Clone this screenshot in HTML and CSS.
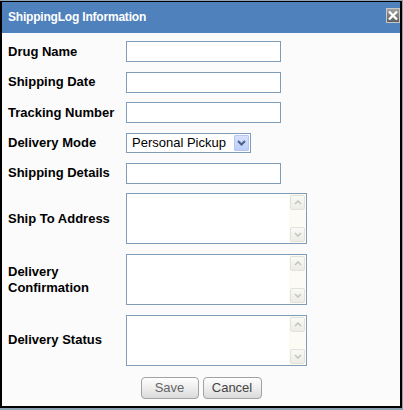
FILE: index.html
```html
<!DOCTYPE html>
<html>
<head>
<meta charset="utf-8">
<link rel="stylesheet" href="styles.css">
</head>
<body>
<div class="dialog">
  <div class="titlebar">
    <span class="title">ShippingLog Information</span>
    <span class="close">
      <svg width="14" height="15" viewBox="0 0 14 15">
        <defs><linearGradient id="cg" x1="0" y1="0" x2="0" y2="1"><stop offset="0" stop-color="#a4a4a4"/><stop offset="1" stop-color="#5c5c5c"/></linearGradient></defs>
        <rect x="0.5" y="0.5" width="13" height="14" fill="url(#cg)" stroke="#c8c8c8"/>
        <path d="M3 3.5L11 11.5M11 3.5L3 11.5" stroke="#fff" stroke-width="2.4"/>
      </svg>
    </span>
  </div>
  <div class="body">
    <div class="form">
      <div class="row"><label class="lbl">Drug Name</label><input class="txt" type="text"></div>
      <div class="row"><label class="lbl">Shipping Date</label><input class="txt" type="text"></div>
      <div class="row"><label class="lbl">Tracking Number</label><input class="txt" type="text"></div>
      <div class="row"><label class="lbl">Delivery Mode</label>
        <div class="select"><span class="sel-text">Personal Pickup</span><span class="sel-btn"><svg width="9" height="6" viewBox="0 0 9 6"><path d="M1 1L4.5 4.5L8 1" fill="none" stroke="#4d6185" stroke-width="2"/></svg></span></div>
      </div>
      <div class="row"><label class="lbl">Shipping Details</label><input class="txt" type="text"></div>
      <div class="row"><label class="lbl">Ship To Address</label>
        <div class="ta"><textarea></textarea><div class="sb"><div class="sb-btn"><svg width="8" height="5" viewBox="0 0 8 5"><path d="M1 4L4 1L7 4" fill="none" stroke="#c4c4bc" stroke-width="1.5"/></svg></div><div class="sb-btn"><svg width="8" height="5" viewBox="0 0 8 5"><path d="M1 1L4 4L7 1" fill="none" stroke="#c4c4bc" stroke-width="1.5"/></svg></div></div></div>
      </div>
      <div class="row"><label class="lbl">Delivery Confirmation</label>
        <div class="ta"><textarea></textarea><div class="sb"><div class="sb-btn"><svg width="8" height="5" viewBox="0 0 8 5"><path d="M1 4L4 1L7 4" fill="none" stroke="#c4c4bc" stroke-width="1.5"/></svg></div><div class="sb-btn"><svg width="8" height="5" viewBox="0 0 8 5"><path d="M1 1L4 4L7 1" fill="none" stroke="#c4c4bc" stroke-width="1.5"/></svg></div></div></div>
      </div>
      <div class="row"><label class="lbl">Delivery Status</label>
        <div class="ta"><textarea></textarea><div class="sb"><div class="sb-btn"><svg width="8" height="5" viewBox="0 0 8 5"><path d="M1 4L4 1L7 4" fill="none" stroke="#c4c4bc" stroke-width="1.5"/></svg></div><div class="sb-btn"><svg width="8" height="5" viewBox="0 0 8 5"><path d="M1 1L4 4L7 1" fill="none" stroke="#c4c4bc" stroke-width="1.5"/></svg></div></div></div>
      </div>
    </div>
    <div class="actions">
      <button class="btn save">Save</button>
      <button class="btn cancel">Cancel</button>
    </div>
  </div>
</div>
</body>
</html>
```
FILE: styles.css
```css
html, body {
  margin: 0;
  padding: 0;
}
body {
  background: #8da1b5;
  font-family: "Liberation Sans", Arial, sans-serif;
  width: 403px;
  height: 410px;
  overflow: hidden;
}
.dialog {
  margin-top: 1px;
  width: 402px;
  height: 407px;
  box-sizing: border-box;
  border-style: solid;
  border-color: #000;
  border-width: 1px 2px 2px 2px;
  background: #fbfbfb;
  display: flex;
  flex-direction: column;
  overflow: hidden;
}
.titlebar {
  height: 31px;
  flex: none;
  background: #4f81bd;
  display: flex;
  justify-content: space-between;
  align-items: flex-start;
  padding-left: 6px;
}
.title {
  color: #fff;
  font-weight: bold;
  font-size: 12px;
  letter-spacing: -0.2px;
  line-height: 31px;
}
.close {
  margin-top: 6px;
  width: 14px;
  height: 15px;
  display: block;
}
.close svg {
  display: block;
}
.body {
  padding-top: 8px;
}
.form {
  padding-left: 6px;
  display: flex;
  flex-direction: column;
  gap: 9.7px;
}
.row {
  display: flex;
  align-items: center;
}
.lbl {
  width: 118px;
  flex: none;
  font-weight: bold;
  font-size: 13px;
  line-height: 16px;
  color: #000;
}
.txt {
  width: 155px;
  height: 21px;
  box-sizing: border-box;
  border: 1px solid #7f9db9;
  background: #fff;
  margin: 0;
  padding: 0 3px;
  font: 13px "Liberation Sans", Arial, sans-serif;
  outline: none;
}
.select {
  width: 125px;
  height: 20px;
  box-sizing: border-box;
  border: 1px solid #7f9db9;
  background: #fff;
  display: flex;
  align-items: center;
  padding: 0 1px 0 1px;
}
.sel-text {
  flex: 1;
  font-size: 13px;
  padding-left: 4px;
  color: #000;
  line-height: 16px;
}
.sel-btn {
  width: 15px;
  height: 16px;
  box-sizing: border-box;
  border: 1px solid #b4c7f2;
  border-radius: 1px;
  background: linear-gradient(#d6e1fd, #bccdf8);
  display: flex;
  align-items: center;
  justify-content: center;
}
.sel-btn svg {
  display: block;
}
.ta {
  width: 181px;
  height: 51px;
  box-sizing: border-box;
  border: 1px solid #7f9db9;
  background: #fff;
  display: flex;
}
.ta textarea {
  flex: 1;
  min-width: 0;
  border: 0;
  margin: 0;
  padding: 2px;
  resize: none;
  outline: none;
  overflow: hidden;
  background: #fff;
  font: 13px "Liberation Sans", Arial, sans-serif;
}
.sb {
  width: 17px;
  flex: none;
  box-sizing: border-box;
  padding: 1px;
  background: #fcfcf5;
  display: flex;
  flex-direction: column;
  justify-content: space-between;
}
.sb-btn {
  height: 15px;
  box-sizing: border-box;
  border: 1px solid #e2e2da;
  border-radius: 2px;
  background: linear-gradient(#f9f9f6, #ededE6);
  display: flex;
  align-items: center;
  justify-content: center;
}
.sb-btn svg {
  display: block;
}
.actions {
  display: flex;
  justify-content: center;
  gap: 4px;
  margin-top: 11px;
}
.btn {
  height: 22px;
  box-sizing: border-box;
  border: 1px solid #a2a2a2;
  border-radius: 4px;
  background: linear-gradient(#fefefe, #ececec 55%, #dadada);
  font: 13px "Liberation Sans", Arial, sans-serif;
  color: #444;
  padding: 0;
  margin: 0;
}
.save {
  width: 58px;
  color: #666;
}
.cancel {
  width: 59px;
}
```
